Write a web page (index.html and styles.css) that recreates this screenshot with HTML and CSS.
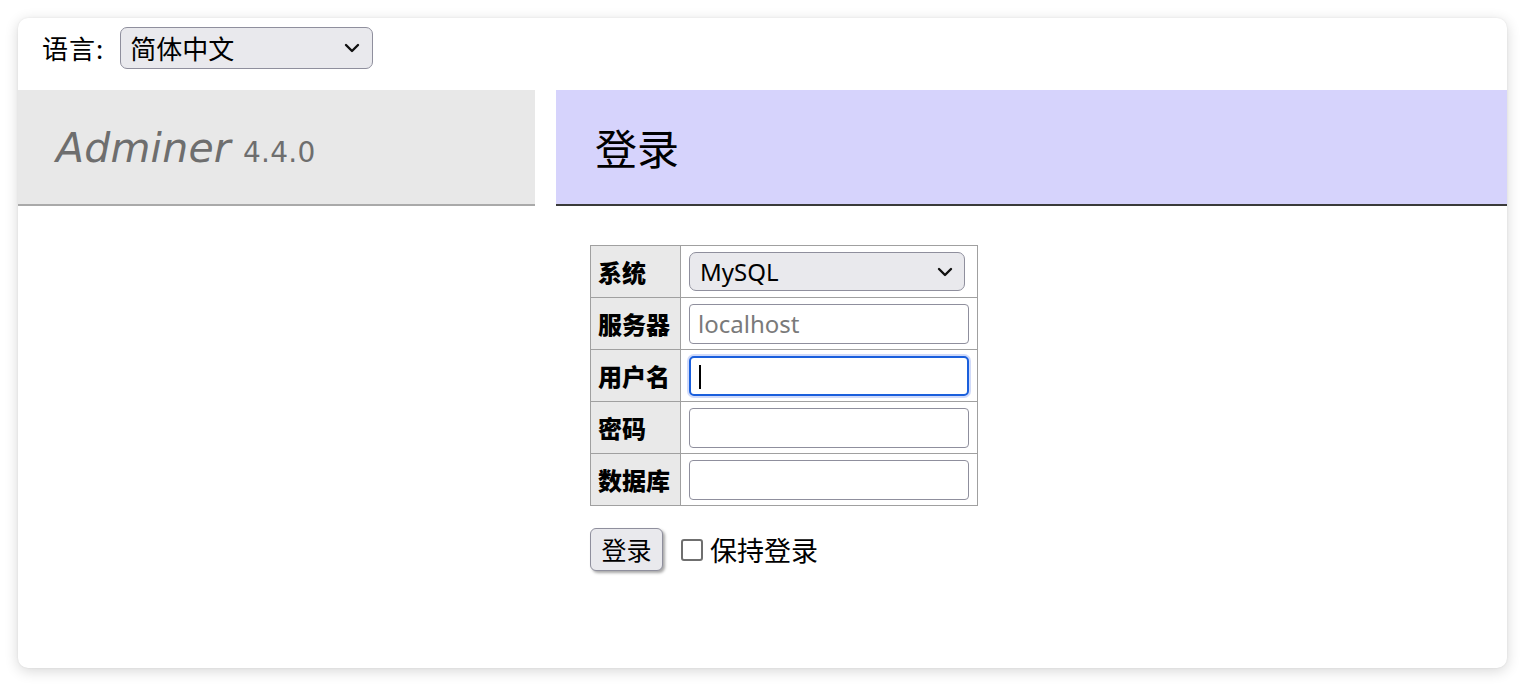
FILE: index.html
```html
<!DOCTYPE html>
<html lang="zh-CN">
<head>
<meta charset="utf-8">
<title>登录 - Adminer</title>
<link rel="stylesheet" href="styles.css">
</head>
<body>
<div class="card">
  <form class="lang-row">
    <label class="lang-label">语言:</label>
    <div class="select-wrap lang-select-wrap">
      <select class="lang-select"><option>简体中文</option></select>
      <svg class="chev" width="16" height="10" viewBox="0 0 16 10"><path d="M2 2 L8 8 L14 2" fill="none" stroke="#111" stroke-width="2.4" stroke-linecap="round" stroke-linejoin="round"/></svg>
    </div>
  </form>
  <div class="layout">
    <div class="sidebar">
      <h1 class="logo"><span class="logo-name">Adminer</span> <span class="logo-ver">4.4.0</span></h1>
    </div>
    <div class="content">
      <h2 class="title">登录</h2>
      <form class="login">
        <table class="login-table">
          <tr><th>系统</th><td>
            <div class="select-wrap sys-select-wrap">
              <select class="sys-select"><option>MySQL</option></select>
              <svg class="chev" width="16" height="10" viewBox="0 0 16 10"><path d="M2 2 L8 8 L14 2" fill="none" stroke="#111" stroke-width="2.4" stroke-linecap="round" stroke-linejoin="round"/></svg>
            </div>
          </td></tr>
          <tr><th>服务器</th><td><input class="field" type="text" placeholder="localhost"></td></tr>
          <tr><th>用户名</th><td><div class="field focused"><span class="caret"></span></div></td></tr>
          <tr><th>密码</th><td><input class="field" type="password"></td></tr>
          <tr><th>数据库</th><td><input class="field" type="text"></td></tr>
        </table>
        <div class="actions">
          <button type="button" class="btn">登录</button>
          <label class="remember"><span class="box"></span>保持登录</label>
        </div>
      </form>
    </div>
  </div>
</div>
</body>
</html>
```

FILE: styles.css
```css
* { box-sizing: border-box; }
html, body { margin: 0; padding: 0; }
body {
  background: #ffffff;
  font-family: "DejaVu Sans", "Noto Sans CJK SC", sans-serif;
  color: #000;
  padding: 18px;
  height: 686px;
  overflow: hidden;
}
.card {
  width: 1489px;
  height: 650px;
  background: #fff;
  border-radius: 10px;
  box-shadow: 0 3px 14px rgba(0,0,0,0.16), 0 0 2px rgba(0,0,0,0.08);
  overflow: hidden;
}
.lang-row {
  display: flex;
  align-items: center;
  height: 72px;
  padding: 9px 0 21px 24px;
  margin: 0;
}
.lang-label {
  font-family: "Noto Sans CJK SC", sans-serif;
  font-size: 26px;
  margin-right: 16px;
  line-height: 1;
  letter-spacing: 1px;
}
.select-wrap { position: relative; }
.select-wrap select {
  appearance: none;
  -webkit-appearance: none;
  background: #e9e9ed;
  border: 1px solid #8f8f9d;
  border-radius: 7px;
  font-family: "Noto Sans", "Noto Sans CJK SC", sans-serif;
  color: #000;
  margin: 0;
  display: block;
}
.chev { position: absolute; top: 50%; margin-top: -5px; pointer-events: none; }
.lang-select {
  width: 253px;
  height: 42px;
  font-size: 26px;
  padding: 0 0 0 9px;
  line-height: 40px;
  font-family: "Noto Sans CJK SC", sans-serif !important;
}
.lang-select-wrap .chev { right: 13px; }
.layout {
  display: flex;
  align-items: flex-start;
}
.sidebar { width: 517px; flex: none; }
.logo {
  margin: 0;
  height: 116px;
  background: #e8e8e8;
  border-bottom: 2px solid #a9a9a9;
  padding: 34px 0 0 38px;
  display: flex;
  align-items: baseline;
  font-weight: normal;
  color: #6e6e6e;
  line-height: 1.2;
}
.logo-name {
  font-style: italic;
  font-size: 41px;
  letter-spacing: 0.2px;
}
.logo-ver {
  font-size: 28px;
  margin-left: 12px;
  letter-spacing: 0.3px;
}
.content { flex: 1; margin-left: 21px; }
.title {
  margin: 0;
  height: 116px;
  background: #d6d3fc;
  border-bottom: 2px solid #3a3a3a;
  font-family: "Noto Sans CJK SC", sans-serif;
  font-weight: normal;
  font-size: 42px;
  padding-left: 39px;
  display: flex;
  align-items: center;
  padding-bottom: 2px;
}
.login { padding: 39px 0 0 34px; margin: 0; }
.login-table {
  border-collapse: collapse;
  border: 1px solid #a0a0a0;
}
.login-table th, .login-table td {
  border: 1px solid #a0a0a0;
  height: 52px;
  padding: 0;
  vertical-align: middle;
}
.login-table th {
  background: #e9e9e9;
  width: 90px;
  text-align: left;
  padding-left: 7px;
  font-family: "Noto Sans CJK SC", sans-serif;
  font-weight: 900;
  font-size: 24px;
  white-space: nowrap;
}
.login-table td { width: 297px; padding-left: 8px; }
.sys-select {
  width: 276px;
  height: 39px;
  font-size: 24px;
  padding: 0 0 0 10px;
}
.sys-select-wrap .chev { left: 248px; }
.field {
  display: block;
  width: 280px;
  height: 40px;
  border: 1px solid #8f8f9d;
  border-radius: 4px;
  background: #fff;
  font-family: "Noto Sans", sans-serif;
  font-size: 24px;
  padding: 0 8px;
  margin: 0;
}
.field::placeholder { color: #7a7a7a; }
.field.focused {
  border: 2px solid #1a5fdc;
  border-radius: 5px;
  box-shadow: 0 0 0 2px rgba(120,150,240,0.35);
  position: relative;
}
.caret {
  position: absolute;
  left: 8px;
  top: 7px;
  width: 2px;
  height: 24px;
  background: #000;
}
.actions {
  display: flex;
  align-items: center;
  margin-top: 22px;
}
.btn {
  width: 73px;
  height: 43px;
  background: #e9e9ed;
  border: 1px solid #8f8f9d;
  border-radius: 6px;
  box-shadow: 2px 2px 3px rgba(0,0,0,0.35);
  font-family: "Noto Sans CJK SC", sans-serif;
  font-size: 25px;
  padding: 0;
  color: #000;
  line-height: 1;
}
.remember {
  display: flex;
  align-items: center;
  margin-left: 18px;
  font-family: "Noto Sans CJK SC", sans-serif;
  font-size: 27px;
}
.box {
  width: 22px;
  height: 22px;
  border: 2px solid #6f6f6f;
  border-radius: 3px;
  background: #fff;
  margin-right: 7px;
}
```
